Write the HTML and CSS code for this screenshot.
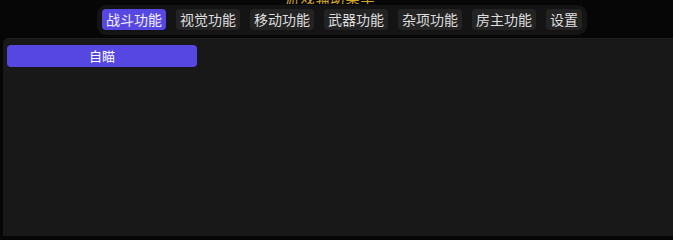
FILE: index.html
```html
<!DOCTYPE html>
<html lang="zh">
<head>
<meta charset="utf-8">
<link rel="stylesheet" href="styles.css">
</head>
<body>
<div class="page">
  <div class="title"><span>游戏辅助菜单</span></div>
  <nav class="tabs">
    <div class="tab active">战斗功能</div>
    <div class="tab">视觉功能</div>
    <div class="tab">移动功能</div>
    <div class="tab">武器功能</div>
    <div class="tab">杂项功能</div>
    <div class="tab">房主功能</div>
    <div class="tab">设置</div>
  </nav>
  <main class="panel">
    <button class="btn">自瞄</button>
  </main>
</div>
</body>
</html>
```
FILE: styles.css
```css
html, body {
  margin: 0;
  padding: 0;
  background: #060606;
  height: 100%;
  overflow: hidden;
}
.page {
  display: flex;
  flex-direction: column;
  height: 236px;
  font-family: "Noto Sans CJK SC", "Noto Sans", sans-serif;
}
.title {
  height: 4px;
  overflow: hidden;
  display: flex;
  align-items: flex-end;
  justify-content: center;
  padding-left: 0;
  margin-left: -12px;
}
.title span {
  font-size: 14px;
  line-height: 14px;
  color: #d4a72a;
  flex: none;
  letter-spacing: 1px;
}
.tabs {
  margin: 1px 0 0 97px;
  width: 490px;
  box-sizing: border-box;
  height: 30px;
  padding: 4px 5px;
  display: flex;
  gap: 10px;
  background: #141414;
  border-radius: 9px;
}
.tab {
  height: 21px;
  line-height: 21px;
  padding: 0 4px;
  font-size: 14px;
  color: #dedede;
  background: #232323;
  border-radius: 4px;
}
.tab.active {
  background: #5646e2;
  color: #f2f0ff;
}
.panel {
  flex: 1;
  margin: 3px 0 0 3px;
  background: #181818;
  border-top: 1px solid #1f1f1f;
  border-top-left-radius: 6px;
  padding: 6px 4px;
}
.btn {
  display: block;
  width: 190px;
  height: 22px;
  border: none;
  border-radius: 4px;
  background: #5646e2;
  color: #ffffff;
  font-family: "Noto Sans CJK SC", "Noto Sans", sans-serif;
  font-size: 13px;
  line-height: 22px;
  padding: 0;
}
```
